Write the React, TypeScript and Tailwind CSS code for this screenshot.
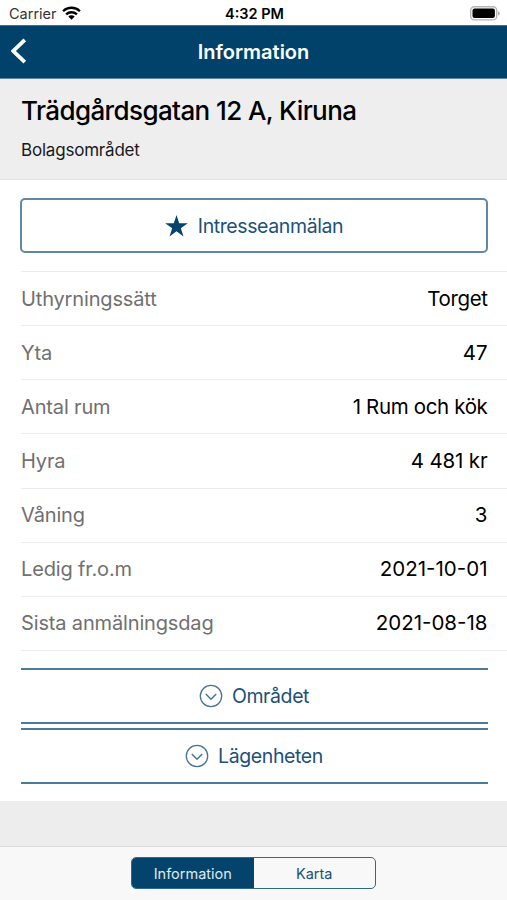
import type { ReactNode } from "react";

type Detail = {
  label: string;
  value: string;
  valueClass: string;
};

const details: Detail[] = [
  { label: "Uthyrningssätt", value: "Torget", valueClass: "tracking-[-0.4px]" },
  { label: "Yta", value: "47", valueClass: "" },
  { label: "Antal rum", value: "1 Rum och kök", valueClass: "tracking-[-0.35px]" },
  { label: "Hyra", value: "4 481 kr", valueClass: "tracking-[-0.15px]" },
  { label: "Våning", value: "3", valueClass: "" },
  { label: "Ledig fr.o.m", value: "2021-10-01", valueClass: "" },
  { label: "Sista anmälningsdag", value: "2021-08-18", valueClass: "" },
];

export default function App() {
  return (
    <div className="flex h-[900px] w-[507px] flex-col overflow-hidden bg-[#ededed] font-['Inter','Liberation_Sans',sans-serif] text-black">
      <StatusBar />
      <NavBar />
      <header className="h-[101px] shrink-0 border-b border-[#e4e4e4] bg-[#eeeeee] px-[21px] pt-[15px]">
        <h1 className="text-[26px] leading-[34px] font-medium tracking-[-0.6px]">
          Trädgårdsgatan 12 A, Kiruna
        </h1>
        <p className="mt-[12px] text-[17px] leading-5 tracking-[-0.2px] text-[#1a1a1a]">
          Bolagsområdet
        </p>
      </header>
      <main className="h-[621px] shrink-0 bg-white pt-[18px]">
        <button
          type="button"
          className="mx-5 flex h-[55px] w-[468px] items-center justify-center gap-2.5 rounded-[5px] border-2 border-[#6088a3] text-[19.5px] tracking-[-0.4px] text-[#1c5179]"
        >
          <StarIcon />
          <span className="pt-0.5">Intresseanmälan</span>
        </button>
        <dl className="mt-[18px] ml-[21px] border-t border-[#ececec]">
          {details.map((detail) => (
            <DetailRow key={detail.label} {...detail} />
          ))}
        </dl>
        <div className="mt-[17px] mr-[19px] ml-[21px] flex flex-col gap-1">
          <Section>Området</Section>
          <Section>Lägenheten</Section>
        </div>
      </main>
      <footer className="mt-[45px] flex flex-1 justify-center border-t border-[#dcdcdc] bg-[#f8f8f8] pt-[10px]">
        <div className="flex h-8 w-[245px] overflow-hidden rounded-[5px] border border-[#2f678d] text-[14.5px]">
          <button type="button" className="w-1/2 bg-[#04446c] pt-px text-[#dfeaf2]">
            Information
          </button>
          <button type="button" className="w-1/2 pt-px text-[#1c5179]">
            Karta
          </button>
        </div>
      </footer>
    </div>
  );
}

function StatusBar() {
  return (
    <div className="grid h-[25px] shrink-0 grid-cols-3 items-center bg-white pt-0.5 pr-[7px] pl-[9px] text-[14.5px]">
      <div className="flex items-center gap-[5px] text-[#333]">
        Carrier
        <WifiIcon />
      </div>
      <p className="text-center font-semibold">4:32 PM</p>
      <div className="flex justify-end">
        <BatteryIcon />
      </div>
    </div>
  );
}

function NavBar() {
  return (
    <nav className="grid h-[54px] shrink-0 grid-cols-3 items-center border-y border-t-[#3b7096] border-b-[#5d87a5] bg-[#00426a] text-white">
      <button type="button" className="pl-[11px]" aria-label="Tillbaka">
        <svg width="16" height="26" viewBox="0 0 16 26" fill="none" className="-mt-[3px]">
          <path d="M13.8 1.8 2.3 13 13.8 24.2" stroke="currentColor" strokeWidth="3.8" />
        </svg>
      </button>
      <p className="text-center text-[20px] font-semibold">Information</p>
    </nav>
  );
}

function DetailRow({ label, value, valueClass }: Detail) {
  return (
    <div className="flex h-[54.14px] items-center justify-between border-b border-[#ececec] pr-[19.5px]">
      <dt className="text-[20px] tracking-[-0.15px] text-[#707070]">{label}</dt>
      <dd className={`pt-px text-[20.5px] ${valueClass}`}>{value}</dd>
    </div>
  );
}

function Section({ children }: { children: ReactNode }) {
  return (
    <button
      type="button"
      className="flex h-[56px] items-center justify-center gap-[9px] border-y-2 border-[#4c7a9b] pr-px text-[19.5px] tracking-[-0.4px] text-[#1c5179]"
    >
      <svg width="24" height="24" viewBox="0 0 24 24" fill="none" stroke="#47758f" strokeWidth="1.3">
        <circle cx="12" cy="12" r="10.7" />
        <path d="m6.8 10 5.2 5.2 5.2-5.2" strokeWidth="1.5" />
      </svg>
      <span className="pt-0.5">{children}</span>
    </button>
  );
}

function StarIcon() {
  return (
    <svg width="23" height="22" viewBox="0 0 23 22" fill="#04446c">
      <path d="m11.5 0 2.7 8.2h8.6l-7 5 2.7 8.2-7-5.1-7 5.1 2.7-8.2-7-5h8.6z" />
    </svg>
  );
}

function WifiIcon() {
  return (
    <svg width="19" height="14" viewBox="0 0 19 14" fill="none" stroke="#000" strokeWidth="2.3" className="-mt-[2px]">
      <path d="M1.1 5.2a12 12 0 0 1 16.8 0" />
      <path d="M4.1 8.4a7.8 7.8 0 0 1 10.8 0" />
      <path d="M9.5 13.8 6.3 10.6a4.6 4.6 0 0 1 6.4 0z" fill="#000" stroke="none" />
    </svg>
  );
}

function BatteryIcon() {
  return (
    <svg width="30" height="15" viewBox="0 0 30 15">
      <rect x="0.7" y="0.7" width="26" height="13.2" rx="3.6" fill="#fff" stroke="#b5b5b5" strokeWidth="1.4" />
      <rect x="2.5" y="2.5" width="22.4" height="9.6" rx="2" fill="#000" />
      <path d="M28 5.2c2.4.8 2.4 3.4 0 4.2z" fill="#ababab" />
    </svg>
  );
}
